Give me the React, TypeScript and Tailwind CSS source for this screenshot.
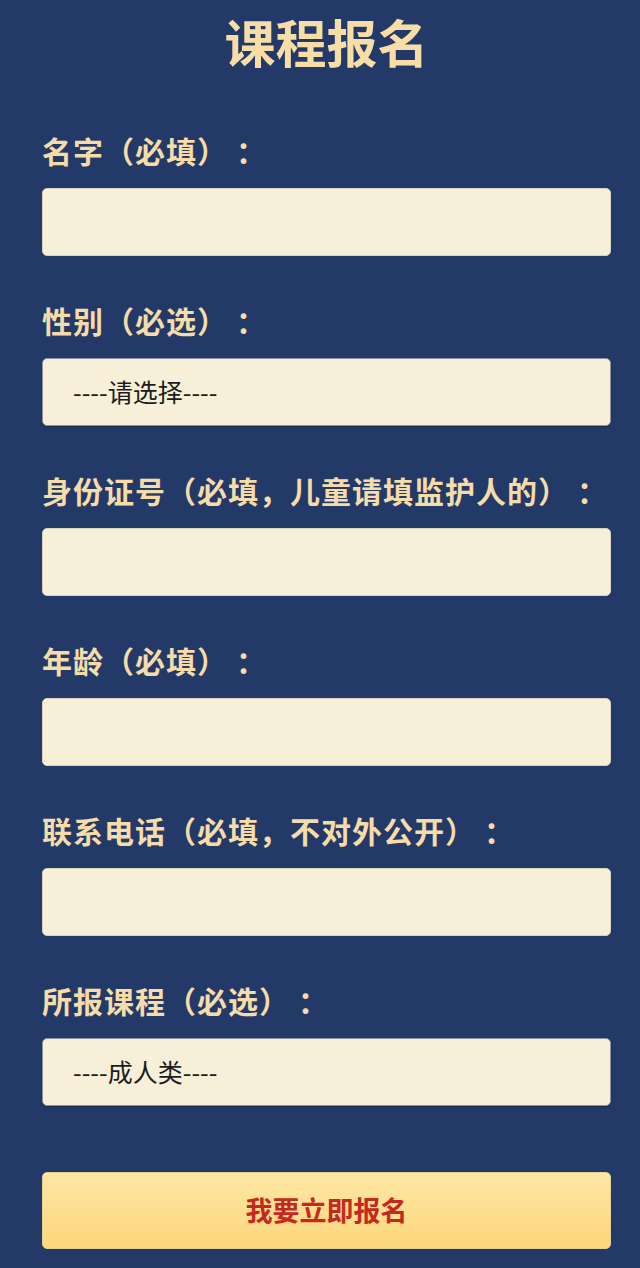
import React from "react";

const fields = [
  { label: "名字（必填）", type: "input" },
  { label: "性别（必选）", type: "select", placeholder: "----请选择----" },
  { label: "身份证号（必填，儿童请填监护人的）", type: "input" },
  { label: "年龄（必填）", type: "input" },
  { label: "联系电话（必填，不对外公开）", type: "input" },
  { label: "所报课程（必选）", type: "select", placeholder: "----成人类----" },
];

const font = { fontFamily: '"Noto Sans CJK SC", "Noto Sans", sans-serif' };

const App = () => {
  return (
    <div
      className="min-h-[1268px] w-[640px] bg-[#233a69] pl-[42px] pr-[29px] pt-[13px]"
      style={font}
    >
      <h1 className="h-[56px] text-center text-[51px] font-bold leading-[56px] text-[#f8dea6]">
        课程报名
      </h1>

      <form className="mt-[64px] flex flex-col gap-[47px]">
        {fields.map((f) => (
          <div key={f.label} className="flex flex-col">
            <label className="mb-[21px] h-[34px] whitespace-nowrap text-[30px] font-bold leading-[34px] tracking-[1px] text-[#f6dca8] [text-spacing-trim:space-all]">
              {f.label}
              <span className="ml-[8px]">：</span>
            </label>
            {f.type === "input" ? (
              <input
                type="text"
                className="h-[68px] w-full rounded-[5px] border border-[#d9d2bc] bg-[#f7efd8] px-[30px] text-[26px] outline-none"
              />
            ) : (
              <select
                className="h-[68px] w-full appearance-none rounded-[5px] border border-[#8f93a0] bg-[#f7efd8] pl-[30px] text-[25px] text-[#1c1c1c] shadow-[0_1px_2px_rgba(0,0,0,0.3)] outline-none"
                defaultValue=""
              >
                <option value="">{f.placeholder}</option>
              </select>
            )}
          </div>
        ))}
      </form>

      <button
        type="button"
        className="mt-[66px] h-[77px] w-full rounded-[5px] border border-[#e8cf8c] bg-gradient-to-b from-[#fde7a4] to-[#fdd67b] text-[27px] font-bold text-[#c5281f]"
      >
        我要立即报名
      </button>
    </div>
  );
};

export default App;
